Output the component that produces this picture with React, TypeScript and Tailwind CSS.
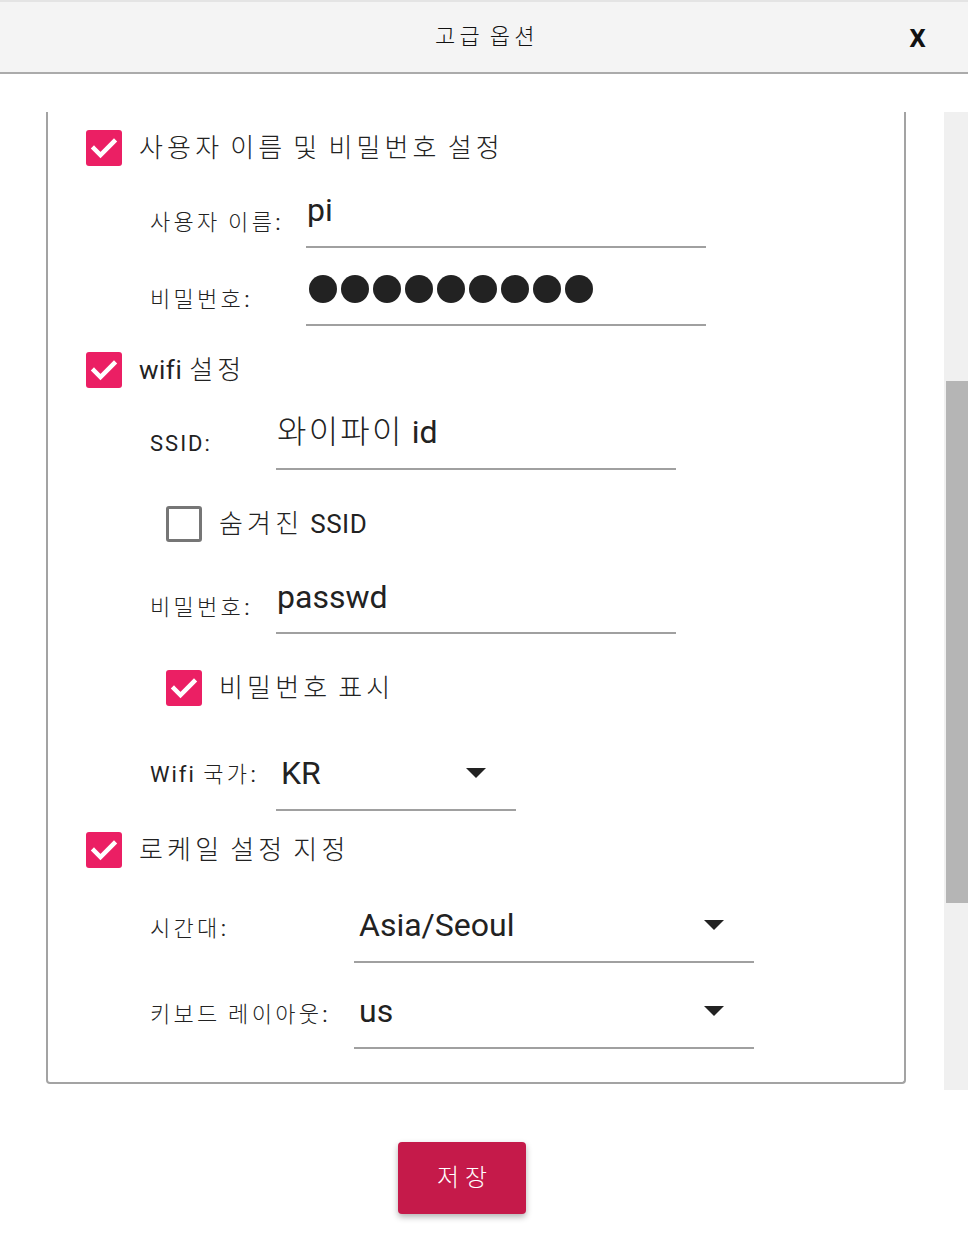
import React from "react";

const FONT = { fontFamily: 'Roboto, "Noto Sans CJK KR", sans-serif' };

// hangul runs get their own (wider) tracking, latin keeps the parent's
function T({ children, k }: { children: string; k: string }) {
  const parts = children.split(/([\uAC00-\uD7A3]+)/);
  return (
    <span>
      {parts.map((p, i) =>
        /[\uAC00-\uD7A3]/.test(p) ? (
          <span key={i} className={`font-light ${k}`}>
            {p}
          </span>
        ) : (
          <span key={i}>{p}</span>
        ),
      )}
    </span>
  );
}

function Check({ checked }: { checked: boolean }) {
  if (!checked) {
    return (
      <span className="block h-[36px] w-[36px] flex-none rounded-[3px] border-[3px] border-[#767676] bg-white" />
    );
  }
  return (
    <span className="flex h-[36px] w-[36px] flex-none items-center justify-center rounded-[3px] bg-[#eb1f64]">
      <svg width="36" height="36" viewBox="0 0 36 36">
        <path
          d="M8 18.5 L14.5 25 L28 11.5"
          fill="none"
          stroke="#fff"
          strokeWidth="4.5"
          strokeLinecap="square"
        />
      </svg>
    </span>
  );
}

function CheckRow({
  checked,
  label,
  indent,
  className,
}: {
  checked: boolean;
  label: string;
  indent: string;
  className?: string;
}) {
  return (
    <div className={`flex h-[36px] items-center gap-[17px] ${indent} ${className ?? ""}`}>
      <Check checked={checked} />
      <span className="text-[26px] leading-[36px] tracking-[0.5px] text-[#222]">
        <T k="tracking-[0.16em]">{label}</T>
      </span>
    </div>
  );
}

function Arrow() {
  return (
    <svg width="20" height="10" viewBox="0 0 20 10" className="flex-none">
      <path d="M0 0 L20 0 L10 10 Z" fill="#222" />
    </svg>
  );
}

function Field({
  label,
  labelW,
  inputW,
  value,
  height,
  labelPt,
  valuePt,
  select,
  className,
}: {
  label: string;
  labelW: string;
  inputW: string;
  value: React.ReactNode;
  height: string;
  labelPt: string;
  valuePt: string;
  select?: boolean;
  className?: string;
}) {
  return (
    <div className={`flex pl-[102px] ${height} ${className ?? ""}`}>
      <div
        className={`${labelW} ${labelPt} flex flex-none items-center text-[22px] tracking-[2px] text-[#222]`}
      >
        <T k="tracking-[0.15em]">{label}</T>
      </div>
      <div
        className={`${inputW} ${valuePt} flex flex-none items-center border-b-2 border-[#a0a0a0] text-[32px] text-[#222]`}
      >
        <span className={`flex-1 ${select ? "pl-[5px]" : "pl-[1px]"}`}>
          {typeof value === "string" ? <T k="tracking-[0.07em]">{value}</T> : value}
        </span>
        {select && (
          <span className="pr-[30px]">
            <Arrow />
          </span>
        )}
      </div>
    </div>
  );
}

export default function App() {
  return (
    <div className="h-[1241px] w-[968px] overflow-hidden bg-white" style={FONT}>
      <header className="relative flex h-[74px] items-center justify-center border-t-2 border-b-2 border-t-[#e4e4e4] border-b-[#ababab] bg-[#f4f4f4]">
        <span className="pb-[2px] pl-[6px] text-[22px] text-[#111]">
          <T k="tracking-[0.2em]">고급 옵션</T>
        </span>
        <span
          className="absolute right-[42px] top-[19px] text-[24px] font-bold text-[#111]"
          style={{ fontFamily: '"DejaVu Sans Condensed", "Liberation Sans Narrow", sans-serif' }}
        >
          X
        </span>
      </header>

      <div className="mt-[38px] flex h-[978px]">
        <div className="flex-1 overflow-hidden">
          <div className="ml-[46px] w-[860px] rounded-b-[4px] border-x-2 border-b-2 border-[#a3a3a3] pb-[33px] pt-[18px]">
            <CheckRow checked label="사용자 이름 및 비밀번호 설정" indent="pl-[38px]" />
            <Field
              label="사용자 이름:"
              labelW="w-[156px]"
              inputW="w-[400px]"
              value="pi"
              height="h-[80px]"
              labelPt="pt-[28px]"
              valuePt="pt-[6px]"
              className="mt-[2px]"
            />
            <Field
              label="비밀번호:"
              labelW="w-[156px]"
              inputW="w-[400px]"
              height="h-[78px]"
              labelPt="pt-[24px]"
              valuePt="pt-[6px]"
              value={
                <span className="flex gap-[4px] pl-[2px]">
                  {Array.from({ length: 9 }).map((_, i) => (
                    <span key={i} className="block h-[28px] w-[28px] rounded-full bg-[#222]" />
                  ))}
                </span>
              }
            />

            <CheckRow checked label="wifi 설정" indent="pl-[38px]" className="mt-[26px]" />
            <Field
              label="SSID:"
              labelW="w-[126px]"
              inputW="w-[400px]"
              value="와이파이 id"
              height="h-[80px]"
              labelPt="pt-[26px]"
              valuePt="pt-[6px]"
              className="mt-[2px]"
            />
            <CheckRow checked={false} label="숨겨진 SSID" indent="pl-[118px]" className="mt-[36px]" />
            <Field
              label="비밀번호:"
              labelW="w-[126px]"
              inputW="w-[400px]"
              value="passwd"
              height="h-[78px]"
              labelPt="pt-[24px]"
              valuePt="pt-[6px]"
              className="mt-[14px]"
            />
            <CheckRow checked label="비밀번호 표시" indent="pl-[118px]" className="mt-[36px]" />
            <Field
              label="Wifi 국가:"
              labelW="w-[126px]"
              inputW="w-[240px]"
              value="KR"
              select
              height="h-[80px]"
              labelPt="pt-[6px]"
              valuePt="pt-[6px]"
              className="mt-[25px]"
            />

            <CheckRow checked label="로케일 설정 지정" indent="pl-[38px]" className="mt-[21px]" />
            <Field
              label="시간대:"
              labelW="w-[204px]"
              inputW="w-[400px]"
              value="Asia/Seoul"
              select
              height="h-[86px]"
              labelPt="pt-[16px]"
              valuePt="pt-[12px]"
              className="mt-[9px]"
            />
            <Field
              label="키보드 레이아웃:"
              labelW="w-[204px]"
              inputW="w-[400px]"
              value="us"
              select
              height="h-[86px]"
              labelPt="pt-[16px]"
              valuePt="pt-[12px]"
            />
          </div>
        </div>
        <div className="w-[24px] flex-none bg-[#f0f0f0]">
          <div className="ml-[2px] mt-[269px] h-[522px] bg-[#b5b5b5]" />
        </div>
      </div>

      <div className="mt-[52px] flex justify-center">
        <button className="ml-[-44px] flex h-[72px] w-[128px] items-center justify-center rounded-[4px] bg-[#c51a4a] pl-[6px] text-[24px] text-white shadow-[0_3px_6px_rgba(0,0,0,0.3)]">
          <T k="tracking-[0.25em]">저장</T>
        </button>
      </div>
    </div>
  );
}
